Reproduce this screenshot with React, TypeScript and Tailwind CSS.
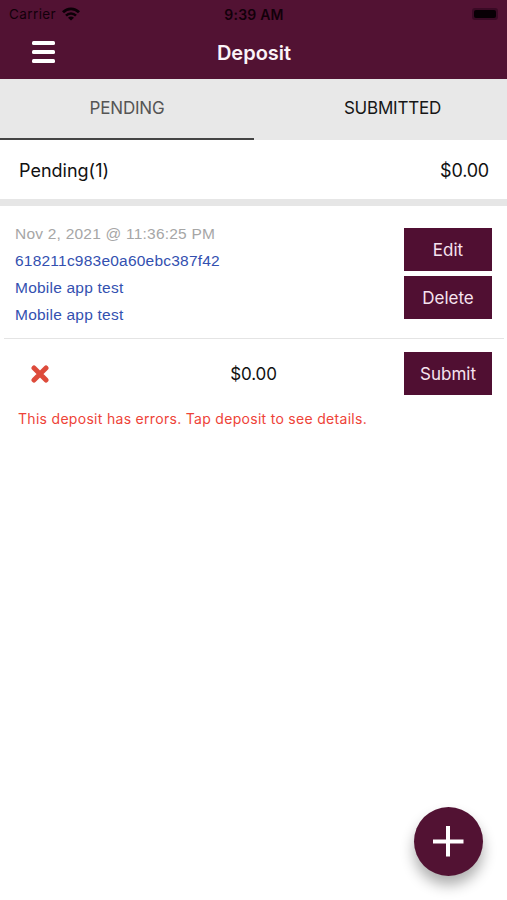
import type { ReactNode } from "react";

interface Deposit {
  id: string;
  createdAt: string;
  lines: string[];
  amount: string;
  error?: string;
}

const deposit: Deposit = {
  id: "618211c983e0a60ebc387f42",
  createdAt: "Nov 2, 2021 @ 11:36:25 PM",
  lines: ["Mobile app test", "Mobile app test"],
  amount: "$0.00",
  error: "This deposit has errors. Tap deposit to see details.",
};

function StatusBar() {
  return (
    <div className="grid h-[27px] grid-cols-3 items-center px-[9px] text-[13.5px] text-[#12000a]">
      <div className="flex items-center gap-[6px]">
        <span className="pt-px tracking-[0.4px]">Carrier</span>
        <svg width="18" height="14" viewBox="0 0 18 14" fill="none" stroke="#0c0007">
          <path d="M1 5.3C5.4 0.6 12.6 0.6 17 5.3" strokeWidth="2.8" />
          <path d="M4 8.6C6.8 5.7 11.2 5.7 14 8.6" strokeWidth="2.5" />
          <path d="M9 13.6L6 10.7C7.7 9.1 10.3 9.1 12 10.7Z" fill="#0c0007" stroke="none" />
        </svg>
      </div>
      <span className="pt-px pl-px text-center text-[14px] font-semibold tracking-[0.2px] whitespace-nowrap">
        9:39 AM
      </span>
      <div className="flex justify-end">
        <div className="flex h-[12px] w-[26px] items-center rounded-[3px] bg-[#3a0a25] p-[2px]">
          <div className="h-[8px] w-full rounded-[2px] bg-[#080005]" />
        </div>
      </div>
    </div>
  );
}

function Header() {
  return (
    <header className="h-[79px] bg-[#521233]">
      <StatusBar />
      <div className="grid h-[50px] grid-cols-3 items-center">
        <button className="ml-8 flex w-[23px] flex-col gap-[4.6px]" aria-label="Menu">
          <span className="h-[4px] w-full rounded-[1.5px] bg-white" />
          <span className="h-[4px] w-full rounded-[1.5px] bg-white" />
          <span className="h-[4px] w-full rounded-[1.5px] bg-white" />
        </button>
        <h1 className="pt-[2px] pl-px text-center text-[20px] font-semibold text-[#fbf4f8]">
          Deposit
        </h1>
      </div>
    </header>
  );
}

function Tabs() {
  return (
    <nav className="grid h-[61px] grid-cols-[254px_1fr] bg-[#e8e8e8] text-[17px] tracking-[-0.2px]">
      <button className="border-b-2 border-[#444] pt-px text-[#555]">PENDING</button>
      <button className="pb-px pl-[24px] text-[#161616]">SUBMITTED</button>
    </nav>
  );
}

function ActionButton({ children }: { children: ReactNode }) {
  return (
    <button className="h-[43px] w-[88px] bg-[#500f32] pt-[2px] text-[17px] text-[#f6e3ef]">
      {children}
    </button>
  );
}

function DepositCard({ item }: { item: Deposit }) {
  return (
    <section>
      <div className="flex h-[132px] justify-between px-[15px]">
        <div className="flex flex-col pt-[14px] font-['Liberation_Sans',Arial,sans-serif] text-[15.5px] leading-[27px] tracking-[0.22px] text-[#3350b0]">
          <span className="text-[#a6a6a6]">{item.createdAt}</span>
          <span>{item.id}</span>
          {item.lines.map((line, i) => (
            <span key={i}>{line}</span>
          ))}
        </div>
        <div className="flex flex-col gap-[5px] pt-[22px]">
          <ActionButton>Edit</ActionButton>
          <ActionButton>Delete</ActionButton>
        </div>
      </div>
      <div className="mr-[3px] ml-1 border-t border-[#e4e4e4]" />
      <div className="grid h-[69px] grid-cols-[1fr_54px_1fr] items-center pr-[15px] pl-[15px]">
        <svg className="ml-4" width="18" height="18" viewBox="0 0 18 18" stroke="#dd4b3b" strokeWidth="5">
          <path d="M3 3L15 15M15 3L3 15" strokeLinecap="round" />
        </svg>
        <span className="pt-[2px] text-center text-[17px] tracking-[-0.1px]">{item.amount}</span>
        <div className="flex justify-end">
          <ActionButton>Submit</ActionButton>
        </div>
      </div>
      {item.error && (
        <p className="pl-[18px] text-[14px] leading-[22px] tracking-[0.3px] whitespace-nowrap text-[#ee4338]">
          {item.error}
        </p>
      )}
    </section>
  );
}

export default function App() {
  return (
    <div className="relative h-[900px] w-[507px] overflow-hidden bg-white font-['Inter',sans-serif] text-[#111]">
      <Header />
      <Tabs />
      <div className="flex h-[59px] items-center justify-between pt-px pr-[18px] pl-[19px] text-[18px]">
        <span>Pending(1)</span>
        <span className="tracking-[-0.2px]">{deposit.amount}</span>
      </div>
      <div className="h-[7px] bg-[#e6e6e6]" />
      <DepositCard item={deposit} />

      {/* Floating add button */}
      <button
        aria-label="Add deposit"
        className="absolute right-[24px] bottom-[24px] flex size-[69px] items-center justify-center rounded-full bg-[#521233] shadow-[0_9px_14px_rgba(0,0,0,0.32)]"
      >
        <svg width="31" height="31" viewBox="0 0 31 31" stroke="#fff" strokeWidth="4">
          <path d="M15 0V30.5M0 15.5H30.5" />
        </svg>
      </button>
    </div>
  );
}
